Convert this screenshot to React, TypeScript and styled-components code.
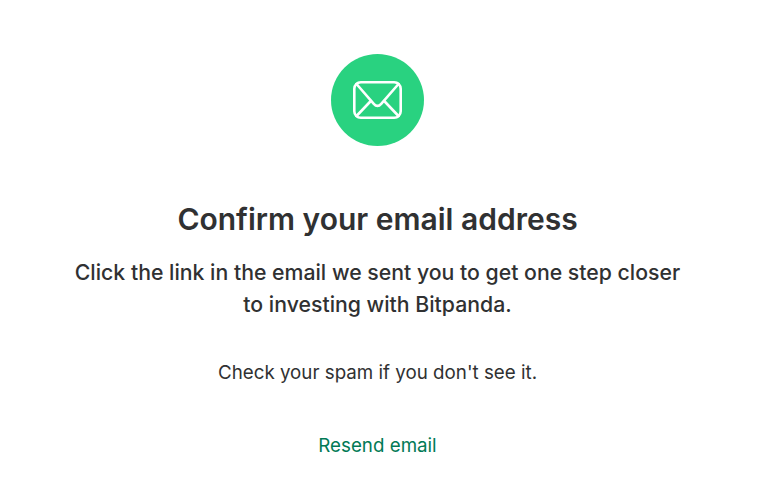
import React from "react";
import styled, { createGlobalStyle } from "styled-components";

const GlobalStyle = createGlobalStyle`
  body { margin: 0; background: #fff; }
`;

const Page = styled.main`
  box-sizing: border-box;
  width: 755px;
  height: 500px;
  padding-top: 54px;
  display: flex;
  flex-direction: column;
  align-items: center;
  text-align: center;
  font-family: Inter, "Liberation Sans", sans-serif;
  color: #303132;
`;

const Badge = styled.div`
  width: 93px;
  height: 92px;
  border-radius: 50%;
  background: #29d280;
  display: flex;
  align-items: center;
  justify-content: center;
`;

const Title = styled.h1`
  margin: 53px 0 0;
  font-size: 30px;
  line-height: 40px;
  font-weight: 600;
  white-space: nowrap;
`;

const Lead = styled.p`
  margin: 17px 0 0;
  font-size: 21.25px;
  line-height: 32px;
  font-weight: 500;
  white-space: nowrap;
`;

const Hint = styled.p`
  margin: 41px 0 0;
  font-size: 18.75px;
  line-height: 24px;
  white-space: nowrap;
`;

const Resend = styled.a`
  margin-top: 49px;
  font-size: 18.75px;
  line-height: 24px;
  color: #027a56;
  text-decoration: none;
  cursor: pointer;
`;

export default function App() {
  return (
    <>
      <GlobalStyle />
      <Page>
        <Badge>
          <svg width="49" height="38" viewBox="0 0 49 38" fill="none" stroke="#fff" strokeWidth="2.6" strokeLinecap="round" strokeLinejoin="round">
            <rect x="1.3" y="1.3" width="46.4" height="35.4" rx="6.5" />
            <path d="M3.5 3 L20.8 22.8 Q24.5 27 28.2 22.8 L45.5 3" />
            <path d="M3.5 35 L17.8 20 M45.5 35 L31.2 20" />
          </svg>
        </Badge>
        <Title>Confirm your email address</Title>
        <Lead>
          Click the link in the email we sent you to get one step closer
          <br />
          to investing with Bitpanda.
        </Lead>
        <Hint>Check your spam if you don't see it.</Hint>
        <Resend>Resend email</Resend>
      </Page>
    </>
  );
}
